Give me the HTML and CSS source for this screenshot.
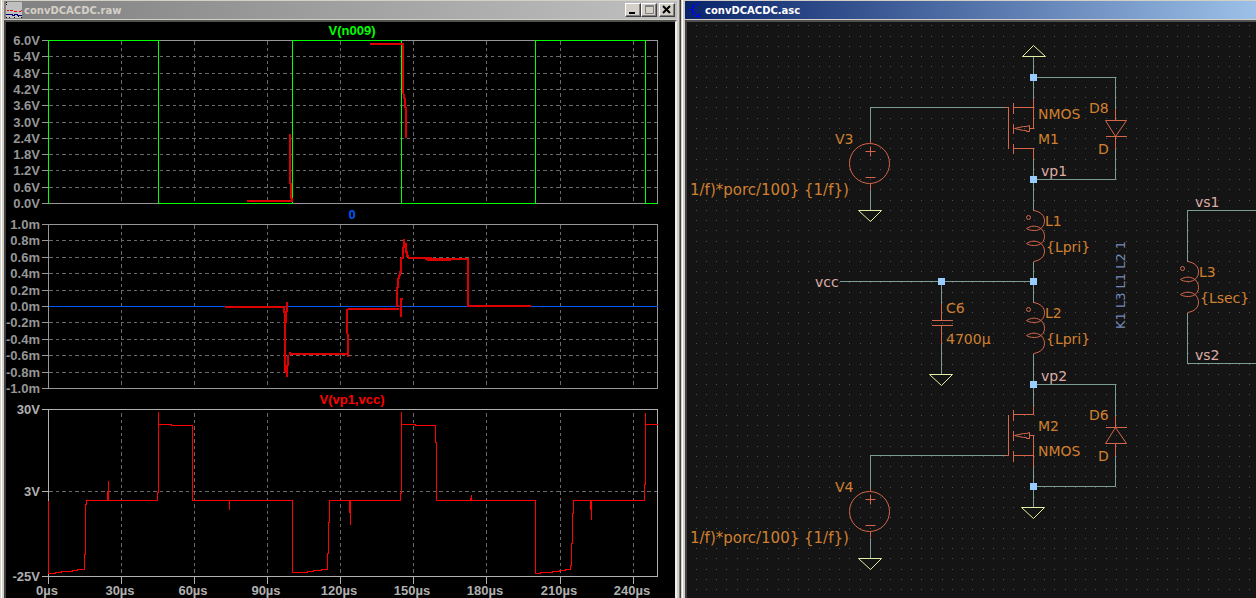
FILE: index.html
```html
<!DOCTYPE html>
<html lang="en">
<head>
<meta charset="utf-8">
<title>convDCACDC</title>
<link rel="stylesheet" href="styles.css">
</head>
<body>
<main class="desktop">
  <section class="window window-plot">
    <header class="titlebar titlebar-inactive">
      <svg class="app-icon" viewBox="0 0 16 16" aria-hidden="true">
        <rect width="16" height="16" fill="#c0c0c0"/>
        <path d="M0 0.5H1M0 2.5H1M0 15.5H1M3 15.5H4M8 15.5H9M12 14.5H13M15 15.5H16" stroke="#000"/>
        <path d="M1 8.5H3M4 8.5H7M8 9.5H11M13 9.5H15M15 8.5H16" stroke="#f00"/>
        <path d="M0 12.5H6L7 13.5H8L9 12.5H11L12 13.5H16" stroke="#000080" fill="none"/>
      </svg>
      <h1 class="title">convDCACDC.raw</h1>
      <div class="buttons">
        <button class="win-button" type="button" aria-label="Minimize"><svg viewBox="0 0 12 10"><path d="M2 8H8" stroke="#000" stroke-width="2"/></svg></button>
        <button class="win-button" type="button" aria-label="Maximize"><svg viewBox="0 0 12 10"><path d="M2.5 1V8.5H10.5V1M2 1H11" stroke="#808080" stroke-width="1" fill="none"/><path d="M2 1H11" stroke="#808080" stroke-width="2"/></svg></button>
        <button class="win-button win-close" type="button" aria-label="Close"><svg viewBox="0 0 12 10"><path d="M2 1L9 8M9 1L2 8" stroke="#000" stroke-width="2"/></svg></button>
      </div>
    </header>
    <div class="client">
      <svg class="canvas canvas-plot" viewBox="6 22 669 576" role="img" aria-label="Waveforms">
        <g class="lines" transform="translate(.5 .5)">
          <path class="grid" d="M48 56H657M48 73H657M48 89H657M48 105H657M48 122H657M48 138H657M48 154H657M48 170H657M48 187H657"/>
          <path class="grid" d="M121 40V203M194 40V203M267 40V203M340 40V203M413 40V203M486 40V203M560 40V203M633 40V203"/>
          <path class="axis" d="M48 40H657V203H48ZM41 40H48M41 56H48M41 73H48M41 89H48M41 105H48M41 122H48M41 138H48M41 154H48M41 170H48M41 187H48M41 203H48"/>
          <path class="grid" d="M48 240H657M48 257H657M48 273H657M48 290H657M48 322H657M48 339H657M48 355H657M48 372H657"/>
          <path class="grid" d="M121 224V388M194 224V388M267 224V388M340 224V388M413 224V388M486 224V388M560 224V388M633 224V388"/>
          <path class="axis" d="M48 224H657V388H48ZM41 224H48M41 240H48M41 257H48M41 273H48M41 290H48M41 306H48M41 322H48M41 339H48M41 355H48M41 372H48M41 388H48"/>
          <path class="grid" d="M48 491H657M121 412V576M194 412V576M267 412V576M340 412V576M413 412V576M486 412V576M560 412V576M633 412V576"/>
          <path class="axis axis-active" d="M48 409H657V576H48ZM41 409H48M41 491H48M41 576H48M48 576V583M121 576V583M194 576V583M267 576V583M340 576V583M413 576V583M486 576V583M560 576V583M633 576V583"/>
          <path class="trace-green" d="M48 203V40H158V203H292V40H401V203H535V40H645V203H657"/>
          <path class="trace-blue" d="M48 306H657"/>
          <path class="trace-red" d="M48 500V573H55V572H61V571H72V570H77V569H84V554H85V504H86V500H157V492H158V411V424H171V425H192V500H292V572H307V571H313V570H321V569H327V553H328V522H329V500H400V493H401V411V424H415V425H435V442H436V500H535V573H540V572H552V571H559V570H565V569H570V565H571V543H572V513H573V500H644V484H645V412V424H657"/>
          <path class="trace-red" d="M107 500V490M108 500V480M229 500V509M349 500V512M350 500V524M470 500V497M471 500V494M590 500V509M591 500V519"/>
        </g>
        <g class="marks">
          <path d="M247 201H293M290 134V184M291 183V199M292 198V202"/>
          <path d="M370 44H403M403 43V94M404 94V99M405 98V108M406 107V138"/>
          <path d="M225 307H284M284 306V313M285 312V372M287 302V312M286 311V323M287 365V377M286 366V373M288 355V366M290 352V355M289 354H349M348 334V357M347 309V334M348 309H399"/>
          <path d="M399 306H396M397 307V287M398 288V278M399 279V275M400 276V271M401 273V258M401 258H403M403 259V247M404 239V248M406 243V253M407 251V257M408 256H409M408 258H432M425 259H468M427 260H451M468 258V306M467 306H531M401 298V317M401 299H403"/>
        </g>
        <g class="ticks tick-end">
          <text x="40" y="45">6.0V</text><text x="40" y="61">5.4V</text><text x="40" y="78">4.8V</text><text x="40" y="94">4.2V</text><text x="40" y="110">3.6V</text><text x="40" y="127">3.0V</text><text x="40" y="143">2.4V</text><text x="40" y="159">1.8V</text><text x="40" y="175">1.2V</text><text x="40" y="192">0.6V</text><text x="40" y="208">0.0V</text>
          <text x="40" y="229">1.0m</text><text x="40" y="245">0.8m</text><text x="40" y="262">0.6m</text><text x="40" y="278">0.4m</text><text x="40" y="295">0.2m</text><text x="40" y="311">0.0m</text><text x="40" y="327">-0.2m</text><text x="40" y="344">-0.4m</text><text x="40" y="360">-0.6m</text><text x="40" y="377">-0.8m</text><text x="40" y="393">-1.0m</text>
          <text class="active" x="40" y="414">30V</text><text class="active" x="40" y="496">3V</text><text class="active" x="40" y="581">-25V</text>
        </g>
        <g class="ticks tick-middle">
          <text class="active" x="47" y="595">0µs</text><text class="active" x="120" y="595">30µs</text><text class="active" x="193" y="595">60µs</text><text class="active" x="266" y="595">90µs</text><text class="active" x="339" y="595">120µs</text><text class="active" x="412" y="595">150µs</text><text class="active" x="485" y="595">180µs</text><text class="active" x="559" y="595">210µs</text><text class="active" x="632" y="595">240µs</text>
          <text class="name-green" x="352" y="35">V(n009)</text>
          <text class="name-blue" x="352" y="219">0</text>
          <text class="name-red" x="352" y="404">V(vp1,vcc)</text>
        </g>
      </svg>
    </div>
  </section>

  <section class="window window-schematic">
    <header class="titlebar titlebar-active">
      <svg class="app-icon" viewBox="0 0 16 16" aria-hidden="true">
        <path d="M2 7.5H5M5.5 2V13M6 6L12 0M6 9L12 15M8 14H12V11" stroke="#00f" fill="none"/>
      </svg>
      <h1 class="title">convDCACDC.asc</h1>
    </header>
    <div class="client">
      <svg class="canvas canvas-schematic" viewBox="687 22 569 576" role="img" aria-label="Schematic">
        <defs>
          <pattern id="dots" x="696" y="36" width="41" height="41" patternUnits="userSpaceOnUse">
            <path class="dot" d="M0 0h1v1h-1zM10 0h1v1h-1zM20 0h1v1h-1zM30 0h1v1h-1zM0 10h1v1h-1zM10 10h1v1h-1zM20 10h1v1h-1zM30 10h1v1h-1zM0 20h1v1h-1zM10 20h1v1h-1zM20 20h1v1h-1zM30 20h1v1h-1zM0 30h1v1h-1zM10 30h1v1h-1zM20 30h1v1h-1zM30 30h1v1h-1z"/>
          </pattern>
          <g id="ground"><path d="M-12 0H11L0 11Z"/></g>
          <g id="coil">
            <path d="M0 0C7 1 11 5 11 10C11 16 7 20 1 20C-3 20 -6 19 -7 18C-4 16 0 15 3 16C8 17 11 21 11 26C11 31 7 35 1 35C-3 35 -6 34 -7 33C-4 31 0 30 3 31C8 32 11 36 11 41C11 46 7 50 0 51"/>
            <circle cx="-5" cy="7" r="2"/>
          </g>
          <g id="source">
            <circle cx="0" cy="0" r="20"/>
            <path d="M1 -23V-20M1 20V26M-4 -12H6M1 -17V-7M-4 14H6"/>
          </g>
          <g id="arrow"><path d="M0 0L9 -2H12L15 -3V3H12V2H9Z"/></g>
        </defs>
        <rect x="687" y="22" width="569" height="576" fill="url(#dots)"/>
        <g class="lines" transform="translate(.5 .5)">
          <path class="wire" d="M870 140V107H1004M870 189V210M1033 56V98M1033 77H1115V108M1115 148V179H1033M1033 158V210M1033 261V302M1033 353V405M839 281H1033M941 281V303M941 343V374M1033 384H1115V415M1115 455V486H1033M1033 466V507M1004 455H870V488M870 537V558M1256 210H1187V261M1187 312V363H1256"/>
          <path class="part" d="M1004 107H1008V148M1013 102V113M1013 123V133M1013 143V153M1013 107H1033M1033 98V128H1029M1013 148H1033V158"/>
          <path class="part" d="M1004 455H1008V414M1013 409V420M1013 430V440M1013 450V461M1013 414H1033V405M1029 435H1033V466M1013 455H1033"/>
          <path class="part" d="M941 303V320M931 320H952M931 325H952M941 325V343"/>
          <path class="part" d="M1115 108V120M1105 136H1126M1115 136V148M1115 415V427M1105 427H1126M1115 443V455"/>
        </g>
        <g class="shapes" transform="translate(.5 .5)">
          <path class="part" d="M1105 120H1126L1115 136ZM1105 443H1126L1115 427Z"/>
          <use class="part" href="#arrow" x="1014" y="128"/>
          <use class="part" href="#arrow" x="1014" y="435"/>
          <use class="part" href="#source" x="869" y="163"/>
          <use class="part" href="#source" x="869" y="511"/>
          <use class="part" href="#coil" x="1033" y="210"/>
          <use class="part" href="#coil" x="1033" y="302"/>
          <use class="part" href="#coil" x="1187" y="261"/>
          <use class="gnd" href="#ground" x="870" y="210"/>
          <use class="gnd" href="#ground" x="941" y="374"/>
          <use class="gnd" href="#ground" x="1033" y="507"/>
          <use class="gnd" href="#ground" x="870" y="558"/>
          <path class="gnd" d="M1022 56H1045L1033 45Z"/>
        </g>
        <path class="node" d="M1030 74h7v7h-7zM1030 176h7v7h-7zM1030 278h7v7h-7zM938 278h7v7h-7zM1030 381h7v7h-7zM1030 483h7v7h-7z"/>
        <g class="label">
          <text x="835" y="144">V3</text><text x="835" y="492">V4</text>
          <text class="formula" x="690" y="195">1/f)*porc/100} {1/f})</text>
          <text class="formula" x="690" y="543">1/f)*porc/100} {1/f})</text>
          <text x="1038" y="119">NMOS</text><text x="1038" y="144">M1</text>
          <text x="1089" y="113">D8</text><text x="1098" y="154">D</text>
          <text x="1045" y="226">L1</text><text x="1046" y="252">{Lpri}</text>
          <text x="1045" y="318">L2</text><text x="1046" y="344">{Lpri}</text>
          <text x="946" y="313">C6</text><text x="946" y="344">4700µ</text>
          <text x="1199" y="277">L3</text><text x="1200" y="303">{Lsec}</text>
          <text x="1038" y="431">M2</text><text x="1038" y="456">NMOS</text>
          <text x="1089" y="420">D6</text><text x="1098" y="461">D</text>
        </g>
        <g class="label net">
          <text x="1041" y="176">vp1</text><text x="1041" y="381">vp2</text>
          <text x="815" y="287">vcc</text><text x="1195" y="207">vs1</text><text x="1195" y="360">vs2</text>
        </g>
        <text class="directive" transform="translate(1125 329) rotate(-90)">K1 L3 L1 L2 1</text>
      </svg>
    </div>
  </section>
</main>
</body>
</html>
```
FILE: styles.css
```css
* { box-sizing: border-box; }

body {
  margin: 0;
  background: #d4d0c8;
}

.desktop {
  display: grid;
  grid-template-columns: 681fr 575fr;
  min-height: 100vh;
  overflow: hidden;
}

.window {
  display: flex;
  flex-direction: column;
  min-width: 0;
  background: #d4d0c8;
  border-left: 1px solid #d4d0c8;
  box-shadow: inset 1px 0 #fff;
  padding: 1px 0 0 3px;
}

.window-plot {
  border-right: 1px solid #404040;
  box-shadow: inset 1px 0 #fff, inset -1px 0 #808080;
  padding-right: 3px;
}

.titlebar {
  display: flex;
  align-items: center;
  height: 18px;
  margin-bottom: 1px;
  padding: 0 2px;
}

.titlebar-inactive {
  background: linear-gradient(to right, #808080, #c0c0c0);
  color: #d4d0c8;
}

.titlebar-active {
  background: linear-gradient(to right, #0a246a, #9cc0e8);
  color: #fff;
}

.app-icon {
  width: 16px;
  height: 16px;
  shape-rendering: crispEdges;
}

.title {
  flex: 1;
  margin: 0;
  padding: 2px 0 0 2px;
  font: bold 10px/16px "DejaVu Sans", sans-serif;
}

.buttons { display: flex; }

.win-button {
  width: 16px;
  height: 14px;
  padding: 0;
  display: grid;
  place-items: center;
  background: #d4d0c8;
  border: 1px solid;
  border-color: #fff #404040 #404040 #fff;
  box-shadow: inset -1px -1px #808080;
}

.win-button svg {
  width: 12px;
  height: 10px;
}

.win-close { margin-left: 2px; }

.client {
  flex: 1;
  border: 2px solid #404040;
  border-top-color: #505050;
  border-bottom: 0;
  background: #000;
}

.window-plot .client { border-right: 2px solid #f0eee8; }

.window-schematic .client {
  border-right: 0;
  background: #141414;
}

.canvas {
  display: block;
  width: 100%;
  height: auto;
}

.lines {
  fill: none;
  stroke-width: 1;
  shape-rendering: crispEdges;
}

.grid { stroke: #6a6a6a; stroke-dasharray: 4 3 3 3; }
.axis { stroke: #969696; }
.axis-active { stroke: #b0b0b0; }
.trace-green { stroke: #0f0; }
.trace-blue { stroke: #0058f8; }
.trace-red { stroke: #f00; }

.marks {
  fill: none;
  stroke: #dc0000;
  stroke-width: 2;
  shape-rendering: crispEdges;
}

.ticks {
  font: bold 13px "Liberation Sans", Arial, sans-serif;
  fill: #969696;
}

.tick-end { text-anchor: end; }
.tick-middle { text-anchor: middle; }
.active { fill: #b0b0b0; }
.name-green { fill: #0f0; }
.name-blue { fill: #0058f8; }
.name-red { fill: #f00; }

.dot { fill: #505050; }

.wire { stroke: #7a9c94; }
.part { stroke: #d4674a; }
.gnd { stroke: #e0f0a0; }

.shapes {
  fill: none;
  stroke-width: 1;
}

.node { fill: #99ccff; }

.label,
.directive {
  font: 14px "DejaVu Sans", sans-serif;
  fill: #d08030;
}

.label .formula { font-size: 15px; }
.net { fill: #dcaca4; }

.directive {
  font-size: 13px;
  fill: #7488b4;
}
```
